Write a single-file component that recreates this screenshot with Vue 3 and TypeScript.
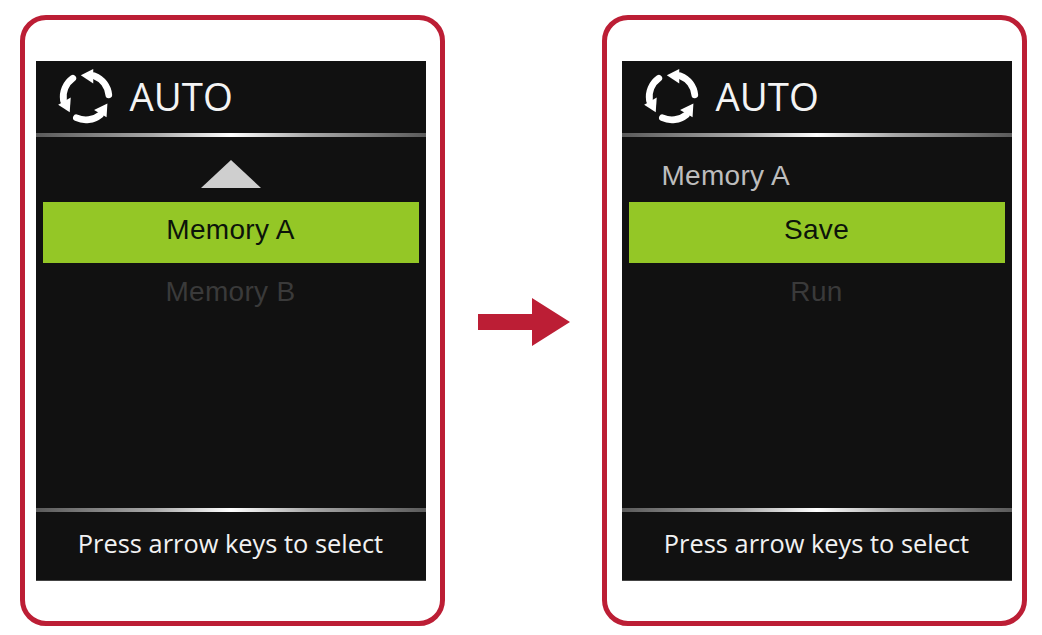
<script setup lang="ts">
interface Panel {
  id: string;
  heading?: string;
  showCaret?: boolean;
  selected: string;
  disabled: string;
}

const panels: Panel[] = [
  { id: "left", showCaret: true, selected: "Memory A", disabled: "Memory B" },
  { id: "right", heading: "Memory A", selected: "Save", disabled: "Run" },
];
const arcAngles = [0, -120, -240];
</script>

<template>
  <main class="page">
    <template v-for="(panel, index) in panels" :key="panel.id">
      <svg v-if="index > 0" class="next-arrow" viewBox="0 0 92 48" aria-hidden="true">
        <path d="M0 16H54V0L92 24L54 48V32H0Z" />
      </svg>
      <section class="card" :class="`card--${panel.id}`">
        <div class="screen">
          <header class="screen__header">
            <svg class="auto-icon" viewBox="0 0 56 56" aria-hidden="true">
              <g v-for="angle in arcAngles" :key="angle" :transform="`rotate(${angle} 28 28)`">
                <path class="auto-icon__arc" d="M50 26A22 22 0 0 0 36 7.5" />
                <path class="auto-icon__head" d="M23 7L35 1L35 15Z" />
              </g>
            </svg>
            <span class="screen__title">AUTO</span>
          </header>
          <div class="divider"></div>
          <div class="menu">
            <div class="menu__row menu__row--top">
              <span v-if="panel.showCaret" class="caret"></span>
              <span v-else class="menu__heading">{{ panel.heading }}</span>
            </div>
            <div class="menu__row menu__row--selected">{{ panel.selected }}</div>
            <div class="menu__row menu__row--disabled">{{ panel.disabled }}</div>
          </div>
          <div class="divider"></div>
          <footer class="screen__footer">Press arrow keys to select</footer>
        </div>
      </section>
    </template>
  </main>
</template>

<style>
html,
body {
  margin: 0;
  background: #fff;
}
</style>

<style scoped>
.page {
  display: flex;
  align-items: center;
  width: 1042px;
  height: 635px;
  box-sizing: border-box;
  padding: 5px 15px 0 20px;
  background: #fff;
}

.card {
  flex: none;
  display: flex;
  align-items: center;
  box-sizing: border-box;
  width: 425px;
  height: 611px;
  border: 5.5px solid #bc1e35;
  border-radius: 26px;
  background: #fff;
}

.card--left {
  padding-left: 10.5px;
}

.card--right {
  padding-left: 14.5px;
}

.screen {
  display: flex;
  flex-direction: column;
  box-sizing: border-box;
  width: 390px;
  height: 520px;
  margin-top: 1px;
  background: #111;
  border-bottom: 1px solid #444;
}

.screen__header {
  flex: none;
  display: flex;
  align-items: center;
  gap: 15px;
  height: 72px;
  padding-left: 21px;
}

.auto-icon {
  flex: none;
  width: 58px;
  height: 58px;
}

.auto-icon__arc {
  fill: none;
  stroke: #fff;
  stroke-width: 6.5;
  stroke-linecap: round;
}

.auto-icon__head {
  fill: #fff;
}

.screen__title {
  font-family: "Open Sans", sans-serif;
  font-size: 38.4px;
  line-height: 1;
  color: #f4f4f4;
}

.divider {
  flex: none;
  height: 4px;
  background: linear-gradient(90deg, #5a5a5a 0%, #a8a8a8 30%, #fff 50%, #a8a8a8 70%, #5a5a5a 100%);
}

.menu {
  flex: 1;
  display: flex;
  flex-direction: column;
  padding: 5px 7px 0;
}

.menu__row {
  flex: none;
  display: flex;
  align-items: center;
  justify-content: center;
  box-sizing: border-box;
  height: 60.5px;
  font-family: "Liberation Sans", Arial, sans-serif;
  font-size: 28px;
  letter-spacing: 0.3px;
}

.menu__row--top {
  justify-content: flex-start;
  padding-left: 33px;
}

.menu__row--selected {
  padding-bottom: 5px;
  background: #94c726;
  color: #0c140a;
}

.menu__row--disabled {
  padding-bottom: 2px;
  color: #3a3a3a;
}

.menu__heading {
  margin-top: 8px;
  color: #bdbdbd;
}

.caret {
  width: 0;
  height: 0;
  margin: 4px 0 0 125px;
  border-left: 30px solid transparent;
  border-right: 30px solid transparent;
  border-bottom: 28px solid #cfcfcf;
}

.screen__footer {
  flex: none;
  display: flex;
  align-items: center;
  justify-content: center;
  box-sizing: border-box;
  height: 68px;
  padding-bottom: 6px;
  font-family: "Open Sans", sans-serif;
  font-size: 25.4px;
  color: #f2f2f2;
}

.next-arrow {
  flex: none;
  width: 92px;
  height: 48px;
  margin: 4px 32px 0 33px;
  fill: #bc1e35;
}
</style>
